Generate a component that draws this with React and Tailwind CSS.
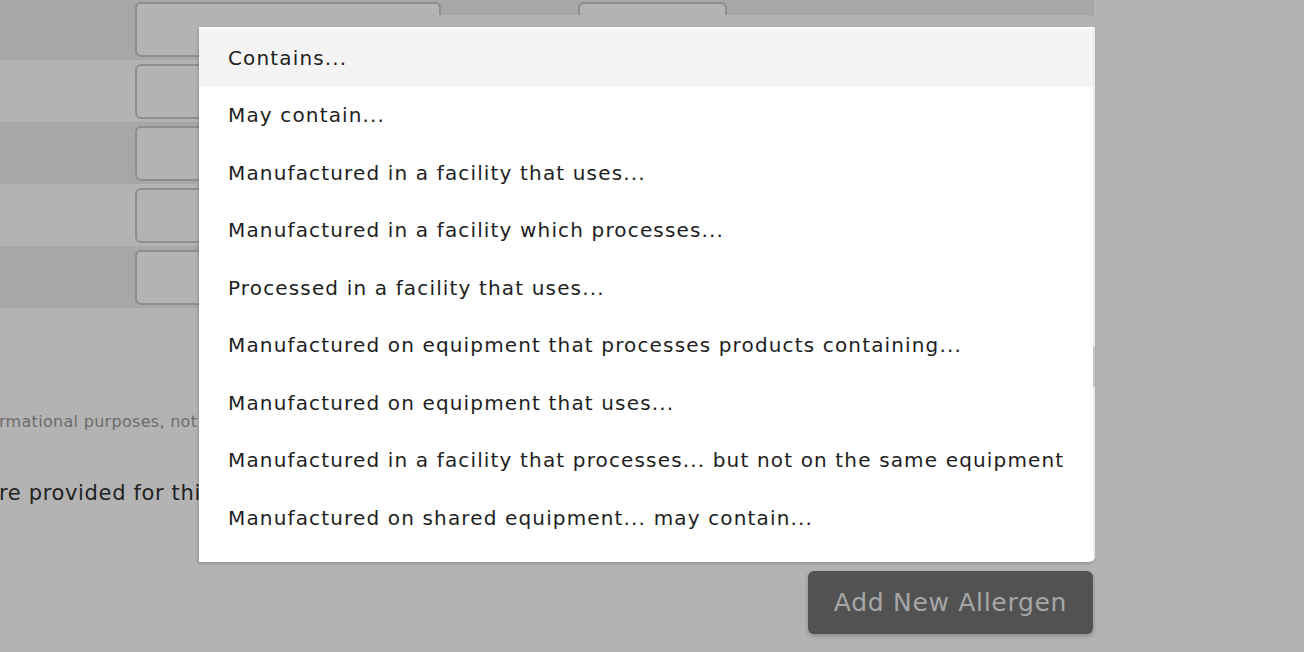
import React from "react";

const options = [
  "Contains...",
  "May contain...",
  "Manufactured in a facility that uses...",
  "Manufactured in a facility which processes...",
  "Processed in a facility that uses...",
  "Manufactured on equipment that processes products containing...",
  "Manufactured on equipment that uses...",
  "Manufactured in a facility that processes... but not on the same equipment",
  "Manufactured on shared equipment... may contain...",
];

const rows = [0, 1, 2, 3, 4];

const AllergenRow = ({ dark }) => (
  <div className={`h-[62px] flex items-start gap-[137px] pt-[4px] pl-[135px] ${dark ? "bg-[#a8a6a6]" : "bg-[#b3b3b3]"}`}>
    <div className="w-[306px] h-[55px] rounded-[6px] border-2 border-[#8e8e8e] bg-[#b3b3b3]" />
    <div className="w-[149px] h-[55px] rounded-[6px] border-2 border-[#8e8e8e] bg-[#b3b3b3]" />
  </div>
);

const StatementMenu = () => (
  <div className="absolute left-[199px] top-[15px] w-[896px]">
    <div className="h-[12px] bg-[#b3b3b3] rounded-t-[6px]" />
    <div className="relative bg-white rounded-br-[6px] pt-[2px] pb-[15px] shadow-[-1px_2px_3px_rgba(0,0,0,0.18)]">
      {options.map((opt, i) => (
        <div
          key={opt}
          className={`h-[57.5px] flex items-center pl-[29px] text-[20px] tracking-[1.15px] text-[#1e1e1e] ${i === 0 ? "bg-[#f4f4f4]" : ""}`}
        >
          {opt}
        </div>
      ))}
      <div className="absolute right-0 top-0 bottom-[6px] w-[2px] bg-[#ececec]" />
      <div className="absolute right-0 top-[320px] h-[40px] w-[2px] bg-[#c4c4c4]" />
    </div>
  </div>
);

export default function App() {
  return (
    <div
      className="relative w-[1304px] h-[652px] overflow-hidden bg-[#b3b3b3] flex flex-col"
      style={{ fontFamily: '"DejaVu Sans", "Liberation Sans", sans-serif' }}
    >
      <div className="w-[1094px] flex flex-col mt-[-2px]">
        {rows.map((r) => (
          <AllergenRow key={r} dark={r % 2 === 0} />
        ))}
      </div>
      <div className="flex flex-col gap-[43px] pt-[101px] -ml-px whitespace-nowrap">
        <p className="text-[16px] tracking-[0.3px] text-[#6c6c6c] leading-[26px]">
          rmational purposes, not intended to replace the product label.
        </p>
        <p className="text-[21px] tracking-[0.65px] text-[#222222] leading-[30px]">
          re provided for this product.
        </p>
      </div>
      <div className="w-[1093px] flex justify-end pt-[63px]">
        <button className="w-[285px] h-[63px] rounded-[6px] bg-[#525252] text-[25px] tracking-[0.7px] text-[#a6a6a6] shadow-[0_2px_4px_rgba(0,0,0,0.25)]">
          Add New Allergen
        </button>
      </div>
      <StatementMenu />
    </div>
  );
}
